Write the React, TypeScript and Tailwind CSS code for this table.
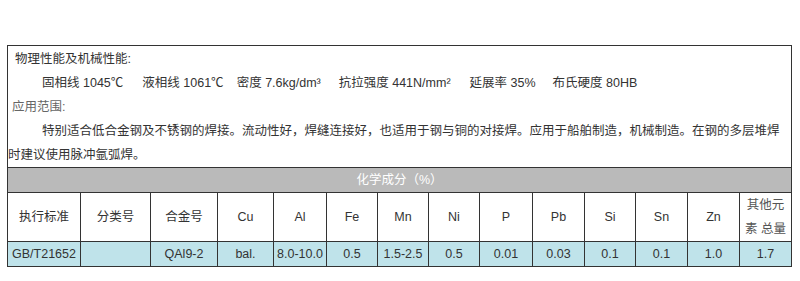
const FONT = '"Liberation Sans", Arial, "Noto Sans CJK SC", sans-serif';

const COLS = [73, 70, 67, 56, 53, 51, 51, 51, 53, 52, 51, 52, 52, 52];

const HEAD = ["执行标准", "分类号", "合金号", "Cu", "Al", "Fe", "Mn", "Ni", "P", "Pb", "Si", "Sn", "Zn"];
const DATA = ["GB/T21652", "", "QAl9-2", "bal.", "8.0-10.0", "0.5", "1.5-2.5", "0.5", "0.01", "0.03", "0.1", "0.1", "1.0", "1.7"];

const PROPS = [
  { label: "固相线", value: "1045℃", gap: "mr-[19px]" },
  { label: "液相线", value: "1061℃", gap: "mr-[13px]" },
  { label: "密度", value: "7.6kg/dm³", gap: "mr-[18px]" },
  { label: "抗拉强度", value: "441N/mm²", gap: "mr-[19px]" },
  { label: "延展率", value: "35%", gap: "mr-[17px]" },
  { label: "布氏硬度", value: "80HB", gap: "" },
];

export default function App() {
  return (
    <div className="h-[281px] w-[800px] bg-white pt-[45px] pl-[7px] text-[12.5px] text-[#333]" style={{ fontFamily: FONT }}>
      <div className="w-[785px] border-x border-t border-[#333] pt-[1px]">
        <div className="pl-[7px] leading-[24px]">物理性能及机械性能:</div>
        <div className="flex pl-[34px] leading-[24px]">
          {PROPS.map((p) => (
            <span key={p.label} className={p.gap}>
              {p.label} {p.value}
            </span>
          ))}
        </div>
        <div className="pl-[4px] leading-[24px] text-[#666]">应用范围:</div>
        <p className="leading-[24px] indent-[34px]">
          特别适合低合金钢及不锈钢的焊接。流动性好，焊缝连接好，也适用于钢与铜的对接焊。应用于船舶制造，机械制造。在钢的多层堆焊
          <br />
          时建议使用脉冲氩弧焊。
        </p>
      </div>
      <table className="w-[785px] table-fixed border-collapse text-center">
        <colgroup>
          {COLS.map((w, i) => (
            <col key={i} style={{ width: w }} />
          ))}
        </colgroup>
        <tbody>
          <tr className="h-[25px] bg-[#bababa]">
            <td colSpan={14} className="border border-[#333] text-white">
              化学成分（%）
            </td>
          </tr>
          <tr className="h-[46px]">
            {HEAD.map((h) => (
              <td key={h} className="border border-[#333]">
                {h}
              </td>
            ))}
            <td className="border border-[#333] leading-[24px] text-[#555]">
              其他元
              <br />
              素 总量
            </td>
          </tr>
          <tr className="h-[25px] bg-[#bfe3ea]">
            {DATA.map((d, i) => (
              <td key={i} className="border border-[#333] whitespace-nowrap">
                {d}
              </td>
            ))}
          </tr>
        </tbody>
      </table>
    </div>
  );
}
